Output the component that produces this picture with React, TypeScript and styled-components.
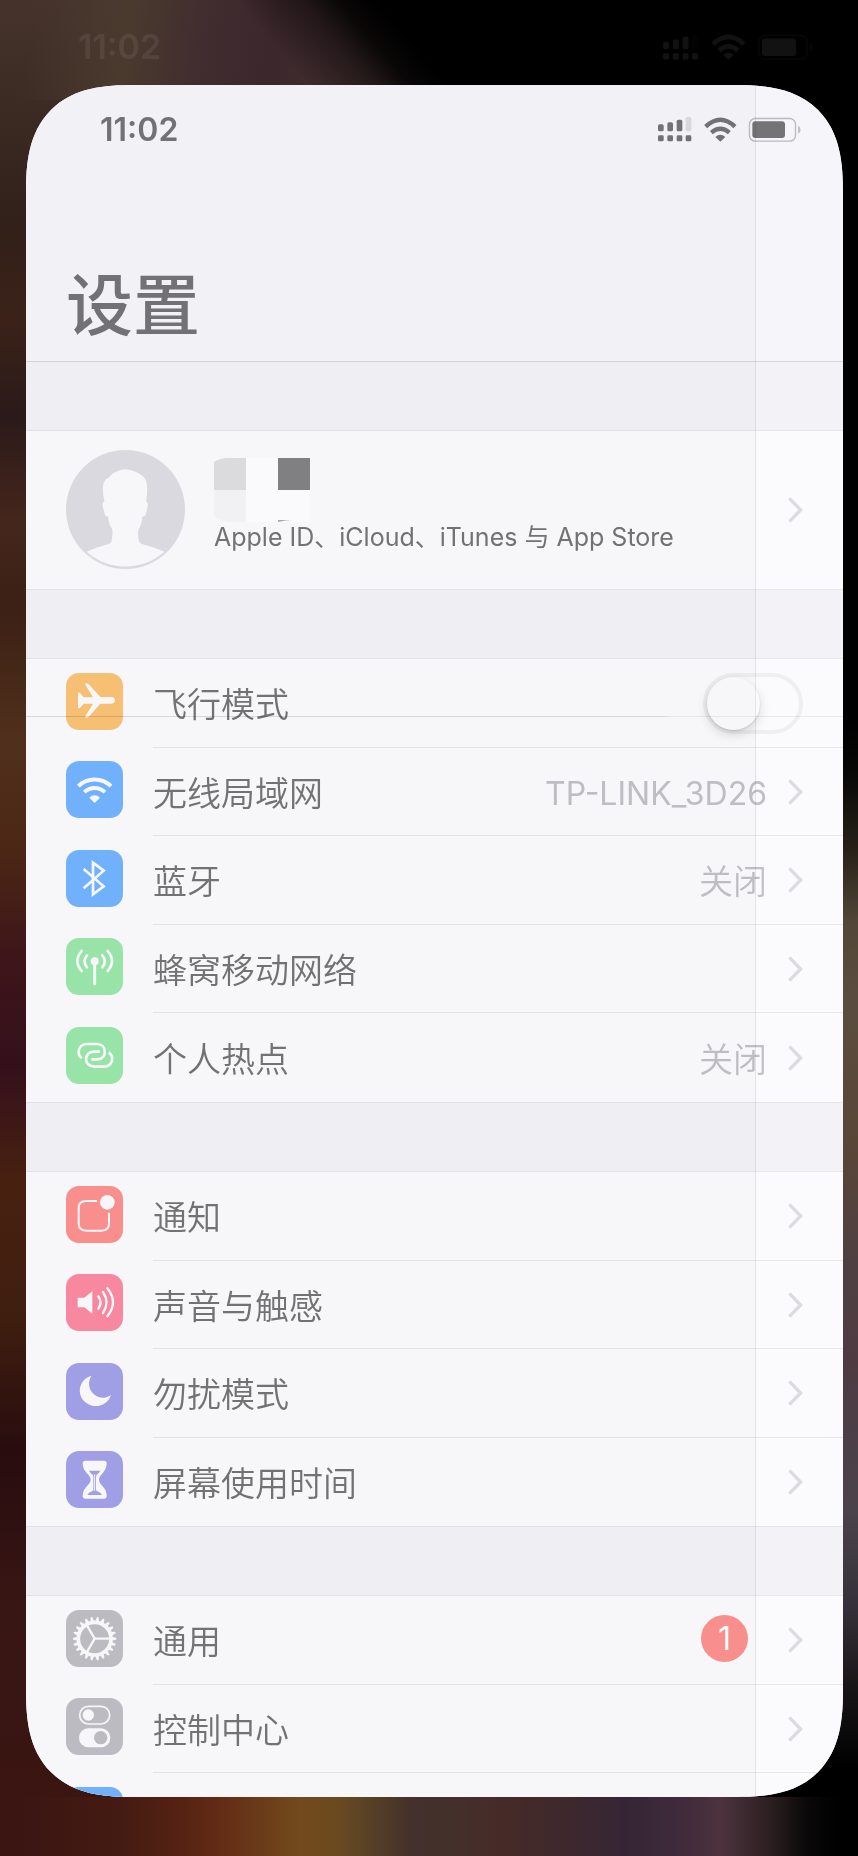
import React from "react";
import styled, { createGlobalStyle, css } from "styled-components";

const sans = `Inter, "Noto Sans CJK SC", "Noto Sans", sans-serif`;

const color = {
  ink: "#727274",
  muted: "#bdbdc3",
  line: "#e1e1e6",
  cell: "#f7f7f9",
  header: "#f2f1f6",
  gap: "#eeeef3",
  chevron: "#d8d8dc",
};

const GlobalStyle = createGlobalStyle`
  *, *::before, *::after { box-sizing: border-box; }
  body { margin: 0; background: #000; }
  a { color: inherit; text-decoration: none; }
`;

const Backdrop = styled.div`
  display: flex;
  flex-direction: column;
  height: 100vh;
  padding: 0 15px 59px 26px;
  overflow: hidden;
  font-family: ${sans};
  color: ${color.ink};
  background:
    linear-gradient(to right, #3a1512 2%, #441b12 14%, #552213 21%, #632d16 26%, #724a1c 35%, #6b4a1f 39%, #5d4425 42%, #44302c 48%, #44302a 53%, #452a28 59%, #40292b 64%, #352535 73%, #3f2a3b 79%, #4c333e 84%, #2a1e20 90%, #0a0808 94%, #000 98%)
      0 100% / 100% 59px no-repeat,
    linear-gradient(50deg, #00000000 34%, #00000077 41%, #000000dd 45%, #000 49%)
      0 0 / 100% 100px no-repeat,
    linear-gradient(98deg, #45332c00 4%, #4a3a2e 15%, #402b2f 25%, #3c272c 32%, #443030 44%)
      0 0 / 100% 100px no-repeat,
    linear-gradient(to bottom, #45332c 0, #3f2e26 70px, #32201a 220px, #3a2218 320px, #2b1a1a 418px, #45261c 521px, #3c2015 606px, #50301c 738px, #4c2615 850px, #3d151a 964px, #35101c 1067px, #482010 1180px, #3f1e10 1321px, #280c0e 1453px, #381614 1604px, #3a1512 1800px)
      0 0 / 50% 100% no-repeat,
    linear-gradient(to bottom, #000 720px, #080807 774px, #262018 847px, #514637 921px, #5a4d3f 995px, #594637 1142px, #4f3f42 1260px, #4e3b42 1364px, #4b434b 1511px, #35303a 1607px, #181516 1688px, #000 1770px)
      100% 0 / 50% 100% no-repeat,
    #000;
`;

const BackStatus = styled.div`
  flex: none;
  display: flex;
  align-items: center;
  justify-content: space-between;
  height: 85px;
  padding: 9px 30px 0 52px;
  font-size: 34px;
  font-weight: 600;
  line-height: 40px;
  color: #fff;
  opacity: 0.07;
`;

const Card = styled.main`
  position: relative;
  flex: 1;
  min-height: 0;
  overflow: hidden;
  border-radius: 86px;
  background: ${color.gap};

  @supports (corner-shape: superellipse(1.4)) {
    border-radius: 108px;
    corner-shape: superellipse(1.4);
  }
`;

const CardHeader = styled.header`
  display: flex;
  flex-direction: column;
  justify-content: space-between;
  height: 277px;
  padding: 25px 42px 15px 40px;
  background: ${color.header};
  border-bottom: 1px solid #d3d3d8;
`;

const CardStatus = styled.div`
  display: flex;
  align-items: center;
  justify-content: space-between;
  padding-left: 34px;
  font-size: 32px;
  font-weight: 600;
  line-height: 40px;
`;

const StatusIcons = styled.svg<{ $width: number }>`
  display: block;
  width: ${(p) => p.$width}px;
  height: auto;
`;

const Title = styled.h1`
  margin: 0;
  font-size: 67px;
  font-weight: 500;
  line-height: 80px;
`;

const Group = styled.ul`
  margin: 68px 0 0;
  padding: 0;
  list-style: none;
  background: ${color.cell};
  border: solid ${color.line};
  border-width: 1px 0;
`;

const RowItem = styled.li`
  height: 89px;

  &:nth-child(even) { height: 88px; }
  &:last-child > * > :last-child { border-bottom: 0; }
`;

const rowLayout = css`
  display: flex;
  align-items: center;
  height: 100%;
  padding-left: 40px;
`;

const RowLink = styled.a`
  ${rowLayout}
`;

const RowLabel = styled.label`
  ${rowLayout}
`;

const RowBody = styled.span`
  flex: 1;
  display: flex;
  align-items: center;
  height: 100%;
  margin-left: 30px;
  padding-right: 40px;
  font-size: 34px;
  font-weight: 350;
  line-height: 48px;
  border-bottom: 1px solid ${color.line};
`;

const RowName = styled.span`
  flex: 1;
  padding-top: 4px;
`;

const RowValue = styled.span<{ $latin: boolean }>`
  margin-right: 21px;
  padding-top: 4px;
  font-size: ${(p) => (p.$latin ? 32 : 34)}px;
  font-weight: ${(p) => (p.$latin ? 400 : 350)};
  color: ${color.muted};
`;

const CountBadge = styled.span`
  width: 47px;
  height: 47px;
  margin: 0 40px 4px 0;
  border-radius: 50%;
  background: #f88f8d;
  color: #fff;
  font-size: 32px;
  font-weight: 400;
  line-height: 47px;
  text-align: center;
`;

const ChevronSvg = styled.svg`
  flex: none;
  display: block;
  width: 15px;
  height: 26px;
`;

const Tile = styled.svg<{ $bg: string }>`
  flex: none;
  display: block;
  width: 57px;
  height: 57px;
  margin-bottom: 5px;
  border-radius: 13px;
  background: ${(p) => p.$bg};
  color: ${color.cell};
`;

const Toggle = styled.input`
  appearance: none;
  width: 100px;
  height: 61px;
  margin: 0;
  border: 4px solid #ebebed;
  border-radius: 31px;

  &::before {
    content: "";
    display: block;
    width: 53px;
    height: 53px;
    border-radius: 50%;
    background: ${color.cell};
    box-shadow: 0 5px 12px rgba(0, 0, 0, 0.13), 0 1px 2px rgba(0, 0, 0, 0.12);
  }
`;

const ProfileGroup = styled.section`
  margin-top: 68px;
  background: ${color.cell};
  border: solid ${color.line};
  border-width: 1px 0;
`;

const ProfileLink = styled.a`
  display: flex;
  align-items: center;
  height: 158px;
  padding: 0 40px;
`;

const Avatar = styled.svg`
  flex: none;
  display: block;
  width: 119px;
  height: 119px;
  margin-bottom: 2px;
`;

const ProfileText = styled.span`
  flex: 1;
  display: flex;
  flex-direction: column;
  margin-left: 29px;
  padding-bottom: 10px;
  font-size: 25px;
  line-height: 30px;
`;

const Mosaic = styled.svg`
  display: block;
  width: 96px;
  height: 64px;
`;

/* Edges of the sheet sliding over the one below. */
const SideSheet = styled.div`
  position: absolute;
  inset: 0 0 0 auto;
  width: 88px;
  border-left: 1px solid rgba(0, 0, 0, 0.08);
  pointer-events: none;
`;

const SideGlow = styled.div`
  position: absolute;
  inset: 0 0 0 auto;
  width: 87px;
  background: #040404;
  mix-blend-mode: color-dodge;
  pointer-events: none;
`;

const SheetEdge = styled.div`
  position: absolute;
  inset: 631px 0 auto;
  height: 1px;
  background: linear-gradient(to right, rgba(0, 0, 0, 0.13) 78%, rgba(0, 0, 0, 0.07) 79%);
  pointer-events: none;
`;

function Indicators({ width }: { width: number }) {
  return (
    <StatusIcons $width={width} viewBox="0 0 429 76" fill="currentColor" aria-hidden="true">
      {[0, 28, 56, 83].map((x) => (
        <rect key={x} x={x} y="55" width="17" height="18" rx="4" />
      ))}
      <rect x="0" y="22" width="17" height="21" rx="5" />
      <rect x="28" y="16" width="17" height="27" rx="5" />
      <rect x="56" y="8" width="17" height="35" rx="5" />
      <rect x="83" y="0" width="17" height="43" rx="5" opacity="0.2" />
      <g fill="none" stroke="currentColor" strokeWidth="13">
        <path d="M143 29Q187 -12 231 29" />
        <path d="M160 47Q187 24 214 47" />
      </g>
      <path d="M187 74L172 60Q187 47 202 60Z" />
      <rect x="274.500" y="4.500" width="138" height="68" rx="17" fill="none" stroke="currentColor" strokeWidth="4" opacity="0.45" />
      <rect x="283" y="13" width="98" height="50" rx="9" />
      <path d="M420 26Q428 29 428 38Q428 47 420 51Z" opacity="0.4" />
    </StatusIcons>
  );
}

function Chevron() {
  return (
    <ChevronSvg viewBox="0 0 45 78" fill="none" stroke={color.chevron} strokeWidth="10" aria-hidden="true">
      <path d="M4 4L38 39L4 74" />
    </ChevronSvg>
  );
}

const line = (w: number) => ({
  fill: "none",
  stroke: "currentColor",
  strokeWidth: w,
  strokeLinecap: "round" as const,
  strokeLinejoin: "round" as const,
});

const icons: Record<string, { bg: string; art: React.ReactNode }> = {
  plane: {
    bg: "#f7bf74",
    art: (
      <path
        fill="currentColor"
        d="M36 59Q41 57 44 62L53 73H81L58 35Q57 31 62 31Q67 32 71 37L103 72H138Q147 74 147 82Q147 90 138 92H103L71 128Q67 133 62 134Q57 134 58 130L81 92H53L44 103Q41 107 36 106Z"
      />
    ),
  },
  wifi: {
    bg: "#71b0fa",
    art: (
      <>
        <g {...line(12)} strokeLinecap="butt">
          <path d="M37 75.500A70 70 0 0 1 135 75.500" />
          <path d="M55 93.500A45 45 0 0 1 117 93.500" />
        </g>
        <path fill="currentColor" d="M86 126L70 110A22 22 0 0 1 102 110Z" />
      </>
    ),
  },
  bluetooth: {
    bg: "#71b0fa",
    art: <path {...line(8)} strokeLinecap="butt" strokeLinejoin="miter" d="M53 57L113 109L81 133V38L113 62L53 115" />,
  },
  cellular: {
    bg: "#98e3a7",
    art: (
      <>
        <circle cx="86" cy="70" r="12" fill="currentColor" />
        <path {...line(9)} d="M86 76V137" />
        <path {...line(8)} d="M47 39Q21 69 47 99M125 39Q151 69 125 99" />
        <path {...line(8)} d="M63 52Q48 70 63 88M109 52Q124 70 109 88" />
      </>
    ),
  },
  hotspot: {
    bg: "#98e3a7",
    art: (
      <path
        {...line(8)}
        strokeLinecap="butt"
        d="M47 94C32 82 35 51 64 51H93C124 51 124 97 95 97H76M102 74H84C52 74 52 119 86 119H112C143 119 144 87 128 76"
      />
    ),
  },
  notify: {
    bg: "#f88f8d",
    art: (
      <>
        <path {...line(6)} strokeLinecap="butt" d="M93 45H60Q38 45 38 66V112Q38 134 60 134H107Q129 134 129 112V80" />
        <circle cx="124" cy="49" r="22" fill="currentColor" />
      </>
    ),
  },
  sound: {
    bg: "#f887a0",
    art: (
      <>
        <path fill="currentColor" d="M35 71H55L79 52V119L55 100H35Z" />
        <path {...line(7)} d="M97 67Q110 85 97 104M111 54Q132 85 111 117M124 43Q158 85 124 127" />
      </>
    ),
  },
  moon: {
    bg: "#a09fe5",
    art: (
      <path fill="currentColor" d="M76 38C36 51 31 98 60 119C88 140 125 127 135 96C116 110 91 106 78 88C66 71 67 53 76 38Z" />
    ),
  },
  hourglass: {
    bg: "#a09fe5",
    art: (
      <>
        <path
          fill="currentColor"
          d="M58 29H114Q122 29 122 37C122 64 99 71 99 86C99 101 122 108 122 134Q122 143 114 143H58Q50 143 50 134C50 108 74 101 74 86C74 71 50 64 50 37Q50 29 58 29Z"
        />
        <path
          fill="#a09fe5"
          d="M69 59H103Q99 67 92 71Q90 73 90 78V116Q90 119 94 121Q105 125 108 132H64Q67 125 78 121Q82 119 82 116V78Q82 73 80 71Q73 67 69 59Z"
        />
        <path stroke="#f7f7f9" strokeWidth="3" d="M86 70V120" />
      </>
    ),
  },
  gear: {
    bg: "#bcbbc2",
    art: (
      <>
        <circle cx="86" cy="86" r="49" fill="none" stroke="currentColor" strokeWidth="11" />
        {Array.from({ length: 22 }, (_, i) => (
          <path key={i} fill="currentColor" d="M136 80L150 83Q153 86 150 89L136 92Z" transform={`rotate(${(i * 360) / 22} 86 86)`} />
        ))}
        {[0, 120, 240].map((a) => (
          <path key={a} stroke="currentColor" strokeWidth="7" d="M86 86H134" transform={`rotate(${a} 86 86)`} />
        ))}
      </>
    ),
  },
  controls: {
    bg: "#bcbbc2",
    art: (
      <>
        <rect x="41" y="25" width="90" height="53" rx="26" fill="none" stroke="currentColor" strokeWidth="5" />
        <circle cx="67" cy="51" r="17" fill="currentColor" />
        <rect x="39" y="91" width="94" height="57" rx="28" fill="currentColor" />
        <circle cx="104" cy="119" r="20" fill="#bcbbc2" />
      </>
    ),
  },
  display: { bg: "#71b0fa", art: null },
};

function Icon({ name }: { name: string }) {
  const { bg, art } = icons[name];
  return (
    <Tile $bg={bg} viewBox="0 0 171 171" aria-hidden="true">
      {art}
    </Tile>
  );
}

interface RowProps {
  icon: string;
  name?: string;
  value?: string;
  count?: number;
}

function Row({ icon, name, value, count }: RowProps) {
  return (
    <RowItem>
      <RowLink href="#">
        <Icon name={icon} />
        <RowBody>
          <RowName>{name}</RowName>
          {value && <RowValue $latin={/^[\w-]+$/.test(value)}>{value}</RowValue>}
          {count && <CountBadge>{count}</CountBadge>}
          <Chevron />
        </RowBody>
      </RowLink>
    </RowItem>
  );
}

export default function App() {
  return (
    <>
      <GlobalStyle />
      <Backdrop>
        <BackStatus aria-hidden="true">
          <span>11:02</span>
          <Indicators width={150} />
        </BackStatus>
        <Card>
          <CardHeader>
            <CardStatus>
              <span>11:02</span>
              <Indicators width={143} />
            </CardStatus>
            <Title>设置</Title>
          </CardHeader>

          <ProfileGroup>
            <ProfileLink href="#">
              <Avatar viewBox="0 0 358 358" aria-hidden="true">
                <circle cx="179" cy="179" r="179" fill="#dad9df" />
                <path
                  fill="#f7f7f9"
                  d="M180 58C160 60 140 67 129 83C116 88 111 100 111 118Q111 140 116 156Q109 155 110 168L117 194Q119 201 127 201Q128 224 139 238Q141 256 137 275Q136 280 128 283Q92 293 62 306A176 176 0 0 0 296 306Q266 293 229 283Q222 280 220 275Q215 256 218 238Q229 224 229 201Q238 201 240 194L246 168Q247 155 241 156Q245 135 244 110Q243 88 229 77Q205 60 180 58Z"
                />
              </Avatar>
              <ProfileText>
                <Mosaic viewBox="0 0 96 64" aria-hidden="true">
                  <path fill="#dbdbdd" d="M0 4Q6 0 14 0H32V32H0Z" />
                  <path fill="#fafafc" d="M32 0H64V32H96V64H32Z" />
                  <path fill="#808082" d="M64 0H96V32H64Z" />
                  <path fill="#f1f1f3" d="M0 32H32V64H14Q6 63 0 58Z" />
                  <path fill="#a8a8aa" d="M64 62H78Q72 62 64 64Z" />
                </Mosaic>
                Apple ID、iCloud、iTunes 与 App Store
              </ProfileText>
              <Chevron />
            </ProfileLink>
          </ProfileGroup>

          <Group>
            <RowItem>
              <RowLabel>
                <Icon name="plane" />
                <RowBody>
                  <RowName>飞行模式</RowName>
                  <Toggle type="checkbox" role="switch" />
                </RowBody>
              </RowLabel>
            </RowItem>
            <Row icon="wifi" name="无线局域网" value="TP-LINK_3D26" />
            <Row icon="bluetooth" name="蓝牙" value="关闭" />
            <Row icon="cellular" name="蜂窝移动网络" />
            <Row icon="hotspot" name="个人热点" value="关闭" />
          </Group>

          <Group>
            <Row icon="notify" name="通知" />
            <Row icon="sound" name="声音与触感" />
            <Row icon="moon" name="勿扰模式" />
            <Row icon="hourglass" name="屏幕使用时间" />
          </Group>

          <Group>
            <Row icon="gear" name="通用" count={1} />
            <Row icon="controls" name="控制中心" />
            <Row icon="display" />
          </Group>

          <SideGlow />
          <SideSheet />
          <SheetEdge />
        </Card>
      </Backdrop>
    </>
  );
}
